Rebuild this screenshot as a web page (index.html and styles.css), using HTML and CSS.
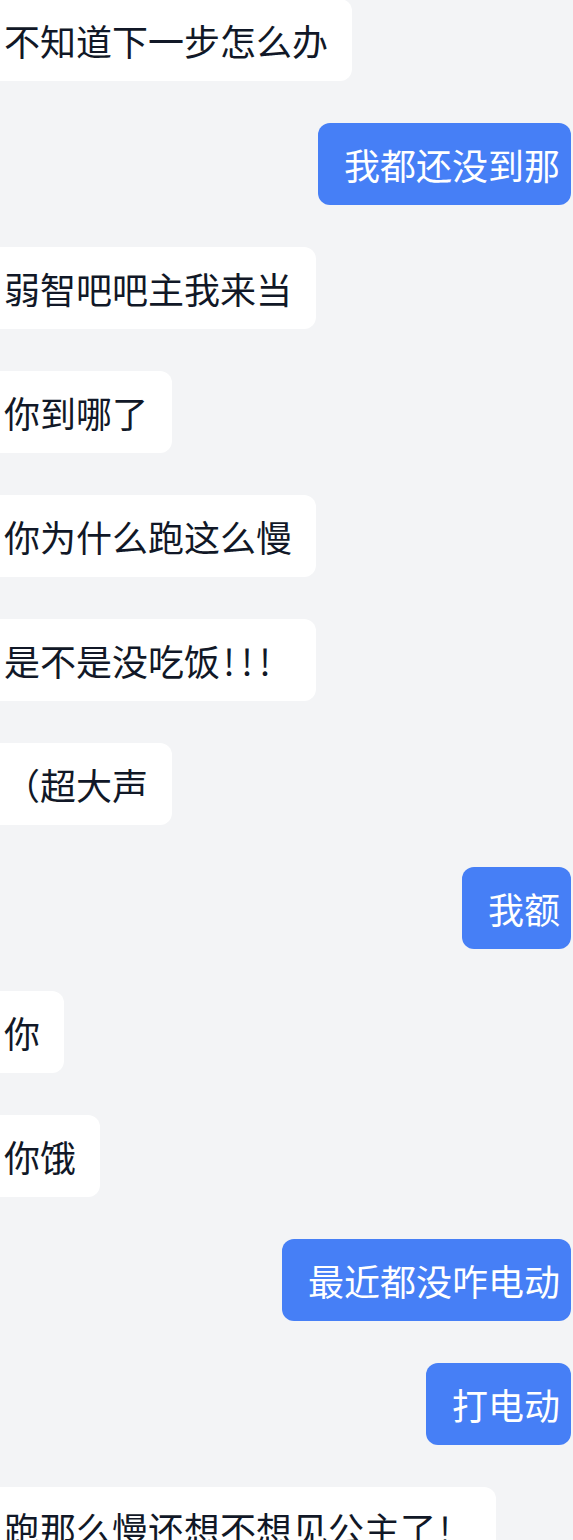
FILE: index.html
```html
<!DOCTYPE html>
<html lang="zh-CN">
  <head>
    <meta charset="UTF-8" />
    <meta name="viewport" content="width=device-width, initial-scale=1.0" />
    <title>聊天</title>
    <link rel="stylesheet" href="styles.css">
  </head>
  <body>
    <div class="chat">
      <div class="msg msg-in">不知道下一步怎么办</div>
      <div class="msg msg-out">我都还没到那</div>
      <div class="msg msg-in">弱智吧吧主我来当</div>
      <div class="msg msg-in">你到哪了</div>
      <div class="msg msg-in">你为什么跑这么慢</div>
      <div class="msg msg-in">是不是没吃饭<span class="half">!!!&nbsp;</span></div>
      <div class="msg msg-in">（超大声</div>
      <div class="msg msg-out">我额</div>
      <div class="msg msg-in">你</div>
      <div class="msg msg-in">你饿</div>
      <div class="msg msg-out">最近都没咋电动</div>
      <div class="msg msg-out">打电动</div>
      <div class="msg msg-in">跑那么慢还想不想见公主了<span class="half">!&nbsp;</span></div>
    </div>
  </body>
</html>
```

FILE: styles.css
```css
body {
  margin: 0;
  padding: 0;
  background-color: #f3f4f6;
  font-family: 'Noto Sans CJK SC', 'Noto Sans', sans-serif;
  overflow: hidden;
}
.chat {
  display: flex;
  flex-direction: column;
  gap: 42px;
  margin-top: -1px;
}
.msg {
  font-size: 36px;
  line-height: 48px;
  padding: 17px 24px;
  border-radius: 12px;
  white-space: nowrap;
}
.msg-in {
  align-self: flex-start;
  margin-left: -20px;
  background-color: #ffffff;
  color: #111827;
}
.msg-out {
  align-self: flex-end;
  margin-right: 2px;
  padding: 17px 11px 17px 26px;
  background-color: #467ff6;
  color: #ffffff;
}
.half {
  font-feature-settings: "hwid";
}
```
